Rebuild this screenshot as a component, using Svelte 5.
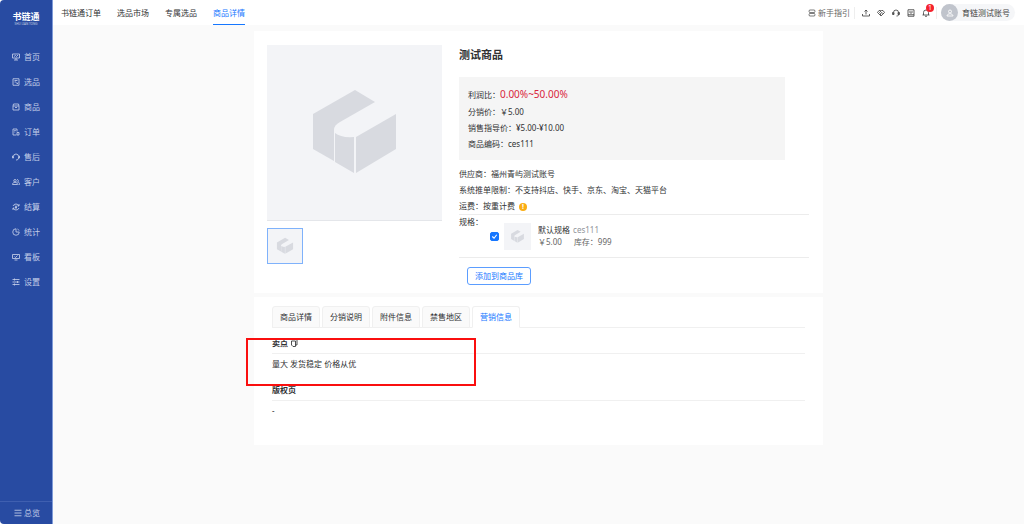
<script>
	const menu = [
		{ name: 'home', label: '首页' },
		{ name: 'select', label: '选品' },
		{ name: 'goods', label: '商品' },
		{ name: 'order', label: '订单' },
		{ name: 'service', label: '售后' },
		{ name: 'client', label: '客户' },
		{ name: 'settle', label: '结算' },
		{ name: 'stats', label: '统计' },
		{ name: 'board', label: '看板' },
		{ name: 'setting', label: '设置' }
	]

	// 16x16 line icons
	const icons = {
		home: 'M1 2h14v8H1zM4 14h8M8 10v4M4 7l3-2 2 2 3-3',
		select: 'M2 1.5h12v13H2zM5 5h6M5 8h3M9 12l3-3M9 9l3 3',
		goods: 'M3 2h10l1 4v8H2V6zM2 6h12M6 9h4',
		order: 'M9 14H2V2h8v5M4.5 5h3M4.5 8h2M10 9h4v5h-4z',
		service: 'M3 10V7a5 5 0 0 1 10 0v3M3 6H1v4h2M13 6h2v4h-2M13 10c0 3-2 4-5 4',
		client: 'M6 8a2.5 2.5 0 1 0 0-5 2.5 2.5 0 0 0 0 5zM1 13c0-6 10-6 10 0zM10 3c4 0 3 5 1 5 3 0 4 2 4 5h-2',
		settle: 'M14 6A6.5 6.5 0 0 0 2 6M2 10a6.5 6.5 0 0 0 12 0M14 2v4h-3M2 14v-4h3M6 5l2 3 2-3M8 8v4M6 9h4',
		stats: 'M8 1.5a6.5 6.5 0 1 0 6.5 6.5H8zM11 2a6 6 0 0 1 3 3',
		board: 'M1 3h14v8H1zM5 14h6M5 7l2 2 4-4',
		setting: 'M1 3h14M1 8h14M1 13h14M5 1v4M11 6v4M5 11v4',
		list: 'M1 2.5h14M1 8h14M1 13.5h14',
		guide: 'M3 2h10q2 2.500 0 5H3q-2-2.500 0-5zM3 9h10q2 2.500 0 5H3q-2-2.500 0-5z',
		upload: 'M1 10v4h14v-4M8 11V2M5 5l3-3 3 3',
		heart: 'M8 14L1 7l3-4h3l1 1 1-1h3l3 4zM8 4L5 7l2 2 3-2 3 3M6 10l2 2',
		headset: 'M3 11V7a5 5 0 0 1 10 0v4M3 7H1v4h3V7M12 7h3v4h-3zM13 11c0 3-2 3-4 3',
		book: 'M2 1.5h12v13H2zM2 11.5h12M6 4v3c0 2 4 2 4 0V4',
		bell: 'M3 12V7a5 5 0 0 1 10 0v5M1 12h14M6 14.5h4',
		user: 'M8 8a3 3 0 1 0 0-6 3 3 0 0 0 0 6zM2 14c0-6 12-6 12 0z',
		copy: 'M6 1h8v11h-3M3 4h8v11H6l-3-3z'
	}

	const pages = ['书链通订单', '选品市场', '专属选品', '商品详情']
	const tools = ['upload', 'heart', 'headset', 'book', 'bell']
	const tabs = ['商品详情', '分销说明', '附件信息', '禁售地区', '营销信息']

	let activePage = '商品详情'
	let activeTab = '营销信息'
	let checked = true
</script>

{#snippet icon(name)}
	<svg class="icon" viewBox="0 0 16 16" aria-hidden="true"><path d={icons[name]} /></svg>
{/snippet}

{#snippet cube()}
	<svg class="cube" viewBox="0 0 175 175" aria-hidden="true">
		<path d="M88 45 108 57 73 77Q67 80 67 85V116L46 104V69z" />
		<path d="M68 88Q74 93 87 92V128L68 117z" />
		<path d="M89 92 129 69V104L89 128z" />
	</svg>
{/snippet}

<div class="layout">
	<aside>
		<div class="logo">
			<strong>书链通</strong>
			<small>SHU LIAN TONG</small>
		</div>
		<nav class="menu">
			{#each menu as item}
				<a href="#{item.name}">{@render icon(item.name)}{item.label}</a>
			{/each}
		</nav>
		<button class="overview">{@render icon('list')}总览</button>
	</aside>

	<div class="page">
		<header>
			<nav class="pages">
				{#each pages as page}
					<a href="#top" class:active={page == activePage} on:click={() => (activePage = page)}>{page}</a>
				{/each}
			</nav>
			<div class="tools">
				<a class="guide" href="#guide">{@render icon('guide')}新手指引</a>
				<div class="toolIcons">
					{#each tools as tool}
						<button aria-label={tool}>
							{@render icon(tool)}
							{#if tool == 'bell'}<span class="badge">1</span>{/if}
						</button>
					{/each}
				</div>
				<button class="account">
					<span class="avatar">{@render icon('user')}</span>
					育链测试账号
				</button>
			</div>
		</header>

		<main>
			<section class="card product">
				<div class="gallery">
					<div class="photo">{@render cube()}</div>
					<button class="thumb" aria-label="商品图片">{@render cube()}</button>
				</div>
				<div class="info">
					<h1>测试商品</h1>
					<div class="prices">
						<p class="profit">利润比：<b>0.00%~50.00%</b></p>
						<p>分销价：￥5.00</p>
						<p>销售指导价：¥5.00-¥10.00</p>
						<p>商品编码：ces111</p>
					</div>
					<div class="facts">
						<p>供应商：福州青屿测试账号</p>
						<p>系统推单限制：不支持抖店、快手、京东、淘宝、天猫平台</p>
						<p>运费：按重计费 <span class="tip">!</span></p>
					</div>
					<div class="specs">
						<span class="specTitle">规格：</span>
						<label class="spec">
							<input type="checkbox" bind:checked />
							<span class="specPhoto">{@render cube()}</span>
							<span class="specText">
								<span>默认规格 <i>ces111</i></span>
								<span class="stock"><span>￥5.00</span><span>库存：999</span></span>
							</span>
						</label>
					</div>
					<button class="add">添加到商品库</button>
				</div>
			</section>

			<section class="card details">
				<div class="tabs" role="tablist">
					{#each tabs as tab}
						<button
							role="tab"
							aria-selected={tab == activeTab}
							class:active={tab == activeTab}
							on:click={() => (activeTab = tab)}
						>
							{tab}
						</button>
					{/each}
				</div>
				<h2>卖点 {@render icon('copy')}</h2>
				<p>量大 发货稳定 价格从优</p>
				<h2>版权页</h2>
				<p>-</p>
				<div class="highlight"></div>
			</section>
		</main>
	</div>
</div>

<style>
	:global(body) {
		background: #fff;
		color: #303133;
		font: 8px/16px "Noto Sans", "Noto Sans CJK SC", sans-serif;
	}
	h1,
	h2,
	p {
		margin: 0;
	}
	a {
		color: inherit;
		text-decoration: none;
	}
	button {
		border: 0;
		padding: 0;
		background: none;
		color: inherit;
		font: inherit;
		cursor: pointer;
	}
	.icon {
		width: 8px;
		height: 8px;
		flex: none;
		fill: none;
		stroke: currentColor;
		stroke-width: 1.7;
	}
	.cube {
		display: block;
		width: 100%;
		fill: #d8dae0;
	}

	.layout {
		display: flex;
		min-height: 100vh;
	}
	aside {
		display: flex;
		flex-direction: column;
		flex: none;
		box-sizing: border-box;
		width: 53px;
		border-right: 1px solid #7f9bd8;
		border-radius: 4px 0 0 4px;
		background: #284ba2;
		color: #c3cee8;
	}
	.logo {
		display: flex;
		flex-direction: column;
		align-items: center;
		gap: 1px;
		padding: 11px 0 18px;
		color: #fff;
	}
	.logo strong {
		font-size: 9px;
		line-height: 11px;
	}
	.logo small {
		font-size: 3px;
		line-height: 3px;
		opacity: 0.7;
	}
	.menu {
		flex: 1;
	}
	.menu a,
	.overview {
		display: flex;
		align-items: center;
		gap: 4px;
		height: 25px;
		padding-left: 12px;
	}
	.overview {
		height: 23px;
		gap: 2px;
		padding-left: 14px;
		border-top: 1px solid #3f5fb0;
	}

	.page {
		flex: 1;
		min-width: 0;
		background: #fafafa;
	}
	header {
		display: flex;
		justify-content: space-between;
		height: 25px;
		padding: 0 9px 0 8px;
		background: #fff;
	}
	.pages {
		display: flex;
		gap: 16px;
	}
	.pages a {
		box-sizing: border-box;
		height: 25px;
		line-height: 25px;
	}
	.pages a.active {
		border-bottom: 1px solid #1677ff;
		color: #1677ff;
	}
	.tools {
		display: flex;
		align-items: center;
		color: #444;
	}
	.guide {
		display: flex;
		align-items: center;
		gap: 2px;
		padding-right: 4px;
		border-right: 1px solid #eee;
		line-height: 12px;
		color: #666;
	}
	.toolIcons {
		display: flex;
		gap: 7px;
		padding: 0 6px 0 7px;
		margin-right: 4px;
		border-right: 1px solid #eee;
	}
	.toolIcons button {
		position: relative;
		display: flex;
		align-items: center;
		height: 12px;
	}
	.badge {
		position: absolute;
		top: -3px;
		right: -4px;
		width: 8px;
		height: 8px;
		border-radius: 50%;
		background: #f5222d;
		color: #fff;
		font-size: 7px;
		line-height: 8px;
	}
	.account {
		display: flex;
		align-items: center;
		gap: 4px;
		padding-right: 5px;
		border-radius: 9px;
		background: #f5f6f8;
	}
	.avatar {
		display: flex;
		align-items: center;
		justify-content: center;
		width: 17px;
		height: 17px;
		border-radius: 50%;
		background: #c0c4cc;
		color: #fff;
	}

	main {
		display: grid;
		gap: 4px;
		max-width: 569px;
		margin: 6px auto 0;
	}
	.card {
		background: #fff;
	}
	.product {
		display: grid;
		grid-template-columns: 175px 1fr;
		gap: 17px;
		padding: 14px 14px 8px 13px;
	}
	.photo {
		border-bottom: 1px solid #e4e6ea;
		background: #f3f4f7;
	}
	.thumb {
		width: 36px;
		height: 36px;
		margin-top: 7px;
		border: 1px solid #7fb2fb;
		background: #f3f4f7;
	}
	h1 {
		font-size: 11px;
		line-height: 20px;
	}
	.prices {
		margin: 12px 24px 6px 0;
		padding: 8px 9px;
		background: #f5f5f5;
	}
	.prices .profit {
		line-height: 19px;
	}
	.profit b {
		color: #d9263e;
		font-size: 10px;
		font-weight: 400;
	}
	.tip {
		display: inline-block;
		width: 8px;
		height: 8px;
		margin-left: 2px;
		border-radius: 50%;
		background: #faad14;
		color: #fff;
		font-size: 7px;
		font-weight: 700;
		line-height: 8px;
		text-align: center;
	}
	.specs {
		display: flex;
		gap: 7px;
		height: 42px;
		border: solid #ececec;
		border-width: 1px 0;
	}
	.specTitle {
		width: 24px;
		line-height: 14px;
	}
	.spec {
		display: flex;
		align-items: center;
	}
	input {
		appearance: none;
		width: 9px;
		height: 9px;
		margin: 0 5px 0 0;
		border: 1px solid #1677ff;
		border-radius: 2px;
	}
	input:checked {
		background: #1677ff url("data:image/svg+xml,%3Csvg xmlns='http://www.w3.org/2000/svg' viewBox='0 0 8 8'%3E%3Cpath d='M1.5 4l2 2 3-4' fill='none' stroke='white' stroke-width='1.3'/%3E%3C/svg%3E") center;
	}
	.specPhoto {
		width: 27px;
		height: 27px;
		background: #f3f4f7;
	}
	.specText {
		margin-left: 7px;
		line-height: 12px;
	}
	.specText > span {
		display: block;
	}
	.specText i {
		margin-left: 1px;
		color: #909399;
		font-style: normal;
	}
	.specText .stock {
		display: flex;
		gap: 12px;
		color: #666;
	}
	.add {
		height: 18px;
		margin: 9px 0 0 8px;
		padding: 0 7px;
		border: 1px solid #5b9dff;
		border-radius: 3px;
		color: #1677ff;
	}

	.details {
		position: relative;
		padding: 9px 18px 23px;
	}
	.tabs {
		display: flex;
		gap: 2px;
		border-bottom: 1px solid #f0f0f0;
	}
	.tabs button {
		height: 22px;
		margin-bottom: -1px;
		padding: 0 7px;
		border: 1px solid #f0f0f0;
		border-radius: 3px 3px 0 0;
		background: #fafafa;
	}
	.tabs button.active {
		border-bottom-color: #fff;
		background: #fff;
		color: #1677ff;
	}
	h2 {
		display: flex;
		align-items: center;
		gap: 2px;
		margin-top: 7px;
		padding-bottom: 2px;
		border-bottom: 1px solid #f0f0f0;
		font-size: 8px;
		line-height: 16px;
	}
	.details p {
		padding-bottom: 2px;
		line-height: 19px;
	}
	/* marks the selling point block */
	.highlight {
		position: absolute;
		top: 41px;
		left: -8px;
		width: 226px;
		height: 44px;
		border: 2px solid #fa0f0f;
	}
</style>
